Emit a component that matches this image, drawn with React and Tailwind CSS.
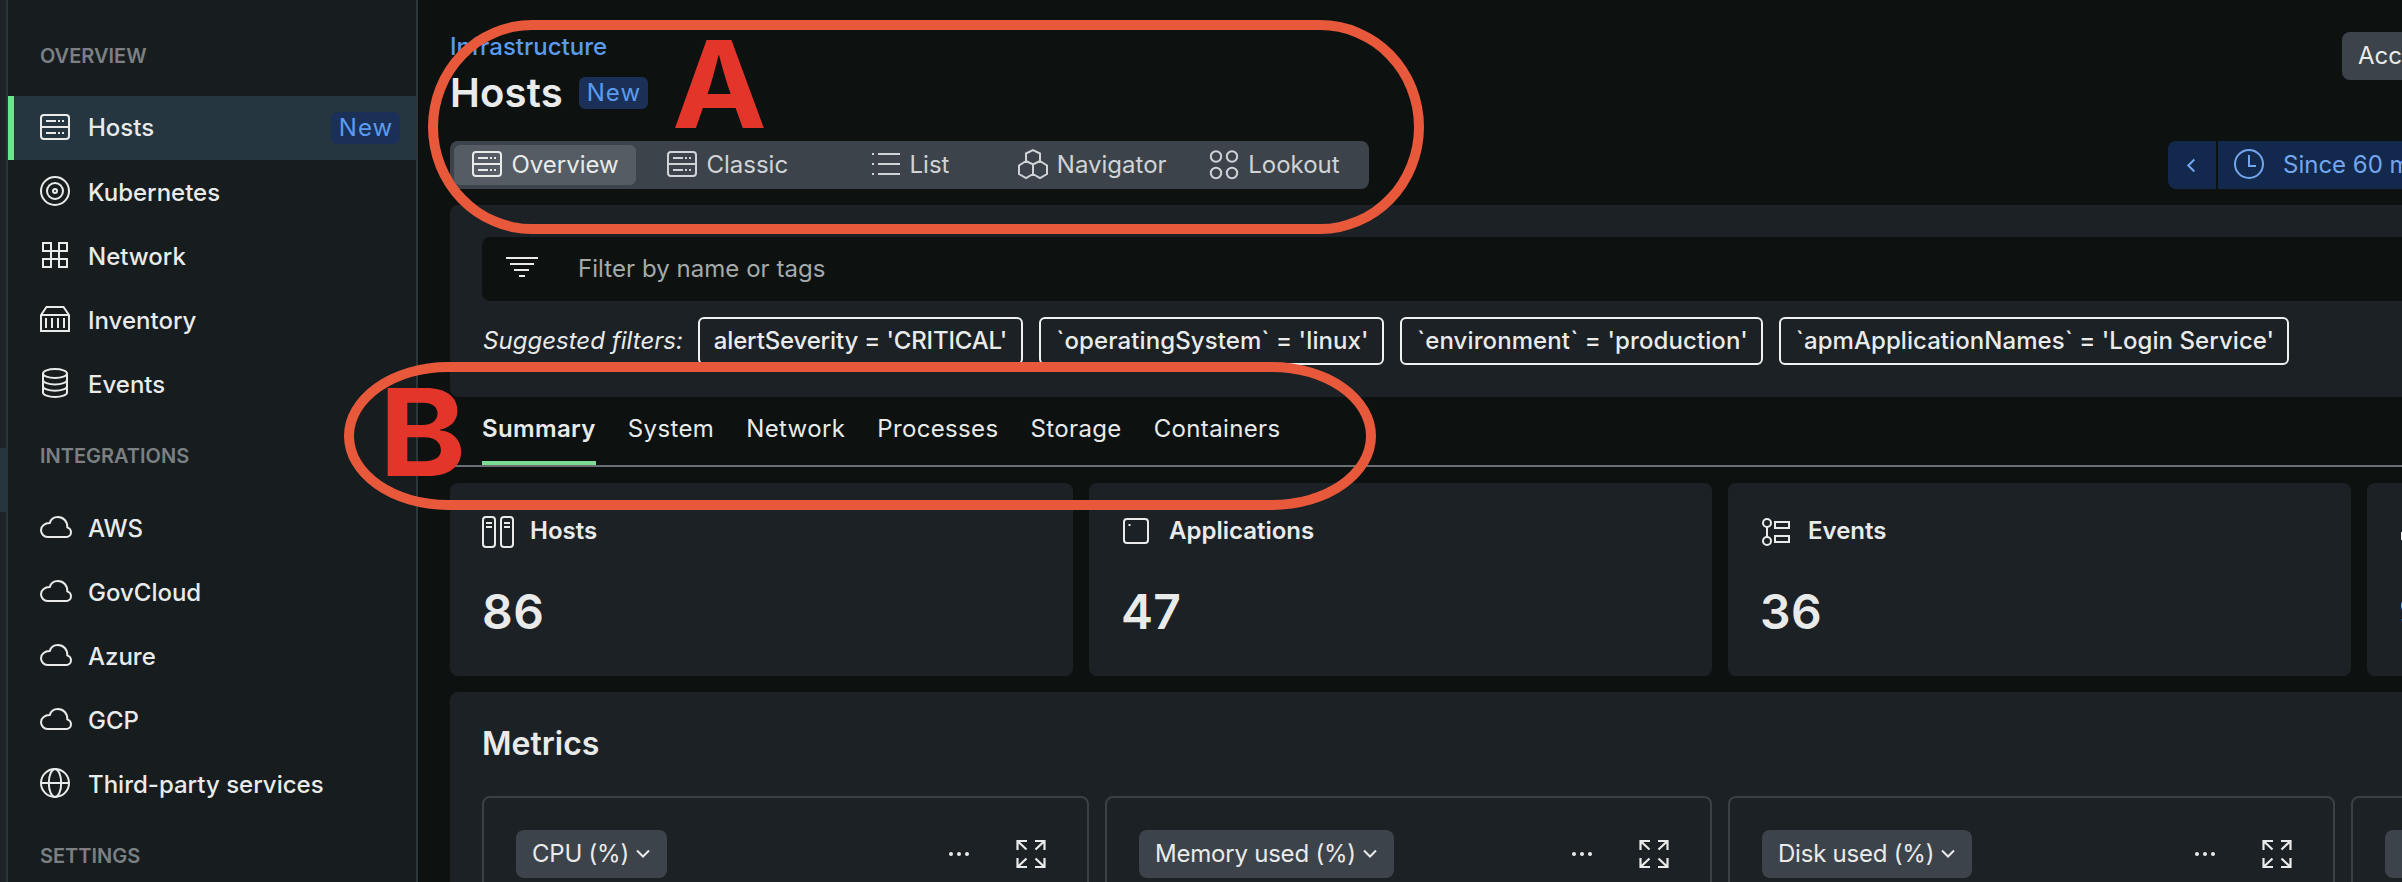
import React from "react";

function Icon({ children, className = "" }) {
  return (
    <svg
      viewBox="0 0 32 32"
      fill="none"
      stroke="currentColor"
      strokeWidth="2"
      className={`size-8 shrink-0 ${className}`}
    >
      {children}
    </svg>
  );
}

const HostIcon = () => (
  <Icon>
    <rect x="1" y="3" width="28" height="24" rx="3" />
    <path d="M1 15H29M6 9H16M18 9H20M22 9H24M6 21H16M18 21H20M22 21H24" />
  </Icon>
);

const KubernetesIcon = () => (
  <Icon>
    <circle cx="15" cy="15" r="14" />
    <circle cx="15" cy="15" r="8" />
    <circle cx="15" cy="15" r="2" />
  </Icon>
);

const NetworkIcon = () => (
  <Icon>
    <path d="M3 3H11V27H3V19H27V27H19V3H27V11H3Z" />
  </Icon>
);

const InventoryIcon = () => (
  <Icon>
    <path d="M1 11L6.5 3H23.5L29 11V27H1ZM1 11H29M6 14V24M12 14V24M18 14V24M24 14V24" />
  </Icon>
);

const DatabaseIcon = () => (
  <Icon>
    <ellipse cx="15" cy="5.5" rx="12" ry="4.5" />
    <path d="M3 5.5V24.5C3 27 8.4 29 15 29S27 27 27 24.5V5.5M3 12C3 14.500 8.400 16.500 15 16.500S27 14.500 27 12M3 18.200C3 20.700 8.400 22.700 15 22.700S27 20.700 27 18.200" />
  </Icon>
);

const CloudIcon = () => (
  <Icon>
    <path d="M7.500 25H26.500A4.700 4.700 0 0 0 31 20.500C31 18 29.600 16.200 27.300 15.400C27.600 9.500 23.500 5 17.800 5C13.800 5 10.900 7.200 9.700 11.100C5 11 1 13.800 1 18.200C1 22 4 25 7.500 25Z" />
  </Icon>
);

const GlobeIcon = () => (
  <Icon>
    <circle cx="15" cy="15" r="14" />
    <ellipse cx="15" cy="15" rx="6.200" ry="14" />
    <path d="M1 15H29" />
  </Icon>
);

const ListIcon = () => (
  <Icon>
    <path d="M1 5H3M7 5H29M1 15H3M7 15H29M1 25H3M7 25H29" />
  </Icon>
);

const HexagonsIcon = () => (
  <Icon>
    <path d="M15 1.200L22 4.500V12L15 15.300L8 12V4.500ZM8 12L1 16.500V25L8 29L15 25V15.300M22 12L29 16.500V25L22 29L15 25" />
  </Icon>
);

const CirclesIcon = () => (
  <Icon>
    <circle cx="7" cy="7.500" r="5.200" />
    <circle cx="23" cy="7.500" r="5.200" />
    <circle cx="7" cy="24" r="5.200" />
    <circle cx="23" cy="24" r="5.200" />
  </Icon>
);

const FilterIcon = () => (
  <Icon>
    <path d="M0 5H32M4 11H28M8 17H23M13 23H19" />
  </Icon>
);

const ClockIcon = () => (
  <Icon>
    <circle cx="15" cy="15" r="14" />
    <path d="M15 6V17H22" />
  </Icon>
);

const ServersIcon = () => (
  <Icon>
    <rect x="1" y="1" width="12" height="30" rx="3" />
    <rect x="19" y="1" width="12" height="30" rx="3" />
    <path d="M4 7H10M4 11H10M22 7H28M22 11H28" />
  </Icon>
);

const AppIcon = () => (
  <Icon>
    <rect x="3" y="3" width="24" height="24" rx="3" />
    <path d="M7.500 9H9.500" />
  </Icon>
);

const EventsIcon = () => (
  <Icon>
    <circle cx="7" cy="7" r="4" />
    <circle cx="7" cy="25" r="4" />
    <path d="M7 11V21" />
    <rect x="15" y="6" width="14" height="6" />
    <rect x="15" y="20" width="14" height="6" />
  </Icon>
);

const AlertIcon = () => (
  <Icon>
    <rect x="3" y="17" width="6" height="6" />
  </Icon>
);

const NewBadge = () => (
  <span className="flex h-8 w-[69px] items-center justify-center rounded-md bg-[#1a3056] pl-px tracking-[1.1px] text-[#5b9bef]">
    New
  </span>
);

const overview = [
  ["Hosts", HostIcon],
  ["Kubernetes", KubernetesIcon],
  ["Network", NetworkIcon],
  ["Inventory", InventoryIcon],
  ["Events", DatabaseIcon],
];

const integrations = [
  ["AWS", CloudIcon],
  ["GovCloud", CloudIcon],
  ["Azure", CloudIcon],
  ["GCP", CloudIcon],
  ["Third-party services", GlobeIcon],
];

const views = [
  ["Overview", HostIcon],
  ["Classic", HostIcon],
  ["List", ListIcon],
  ["Navigator", HexagonsIcon],
  ["Lookout", CirclesIcon],
];

const filters = [
  ["alertSeverity = 'CRITICAL'", "w-[325px] tracking-[-0.16px]"],
  ["`operatingSystem` = 'linux'", "w-[345px] pl-0.5 tracking-[0.1px]"],
  ["`environment` = 'production'", "w-[363px] pl-0.5 tracking-[0.1px]"],
  ["`apmApplicationNames` = 'Login Service'", "w-[510px] pl-0.5 tracking-[0.06px]"],
];

const tabs = ["System", "Network", "Processes", "Storage", "Containers"];

const stats = [
  ["Hosts", "86", ServersIcon],
  ["Applications", "47", AppIcon],
  ["Events", "36", EventsIcon],
  ["", "9", AlertIcon],
];

const metrics = ["CPU (%)", "Memory used (%)", "Disk used (%)", ""];

function NavHeading({ children }) {
  return (
    <h2 className="flex h-20 items-center pl-8 text-xl font-semibold text-[#7b8083]">{children}</h2>
  );
}

function NavItem({ label, icon: Glyph, active }) {
  return (
    <li
      className={`flex h-16 items-center border-l-[6px] pl-[26px] pr-4 font-medium ${
        active ? "border-[#6fe48f] bg-[#263640]" : "border-transparent"
      }`}
    >
      <Glyph />
      <span className={`ml-4 flex-1 ${active ? "" : "pt-0.5"}`}>{label}</span>
      {active && (
        <span className="font-normal">
          <NewBadge />
        </span>
      )}
    </li>
  );
}

function Sidebar() {
  return (
    <aside className="flex shrink-0">
      <div className="w-1.5 bg-[#1e2327] pt-[448px]">
        <div className="h-16 bg-[#263640]" />
      </div>
      <nav className="w-[412px] border-x-2 border-[#2c353a] bg-[#171c1f] pt-4">
        <NavHeading>OVERVIEW</NavHeading>
        <ul>
          {overview.map(([label, icon], i) => (
            <NavItem key={label} label={label} icon={icon} active={i === 0} />
          ))}
        </ul>
        <NavHeading>INTEGRATIONS</NavHeading>
        <ul>
          {integrations.map(([label, icon]) => (
            <NavItem key={label} label={label} icon={icon} />
          ))}
        </ul>
        <NavHeading>SETTINGS</NavHeading>
      </nav>
    </aside>
  );
}

function Header() {
  return (
    <header className="flex justify-between">
      <div className="flex flex-col pt-[31px]">
        <a className="h-8 font-medium leading-8 text-[#5b9bef]">Infrastructure</a>
        <div className="mt-3.5 flex h-8 items-center gap-4">
          <h1 className="text-[40px] font-semibold tracking-[0.2px]">Hosts</h1>
          <NewBadge />
        </div>
        <div className="mt-8 grid h-12 w-[919px] grid-cols-5 rounded-lg bg-[#3d434a] p-1">
          {views.map(([label, Glyph], i) => (
            <button
              key={label}
              className={`flex items-center justify-center gap-[7px] rounded-md pl-px ${
                i === 0 ? "bg-[#565c63]" : "text-[#d0d4d6]"
              }`}
            >
              <Glyph />
              {label}
            </button>
          ))}
        </div>
      </div>
      <div className="flex w-[234px] flex-col justify-between pt-8">
        <button className="flex h-12 w-[60px] items-center self-end overflow-hidden rounded-l-lg bg-[#3d434a] pl-4">
          Acc
        </button>
        <div className="flex h-12 gap-0.5 text-[#72a7ee]">
          <button className="flex w-12 items-center rounded-l-lg bg-[#12294d] pl-[18px]">
            <svg viewBox="0 0 10 14" fill="none" stroke="currentColor" strokeWidth="2" className="h-3.5 w-2.5">
              <path d="M8.300 1.500L2.300 7.500L8.300 13.500" />
            </svg>
          </button>
          <button className="flex flex-1 items-center overflow-hidden whitespace-nowrap bg-[#12294d] pl-4">
            <ClockIcon />
            <span className="ml-[17px]">Since 60 m</span>
          </button>
        </div>
      </div>
    </header>
  );
}

function FilterPanel() {
  return (
    <section className="mt-4 h-48 rounded-l-lg bg-[#1c2125] pl-8 pt-8">
      <div className="flex h-16 items-center rounded-l-lg bg-[#0d1211] pl-6">
        <FilterIcon />
        <span className="ml-10 tracking-[0.05px] text-[#a6a9aa]">Filter by name or tags</span>
      </div>
      <div className="mt-4 flex h-12 items-center gap-4">
        <span className="w-[200px] whitespace-nowrap pl-px tracking-[0.03px] italic">Suggested filters:</span>
        {filters.map(([label, size]) => (
          <button
            key={label}
            className={`flex h-12 shrink-0 items-center justify-center whitespace-nowrap rounded-md border-2 border-[#eef1f1] font-medium ${size}`}
          >
            {label}
          </button>
        ))}
      </div>
    </section>
  );
}

function Tabs() {
  return (
    <nav className="flex h-[70px] items-stretch gap-8 border-b-2 border-[#6a6f73] pl-8 tracking-[0.36px]">
      <button className="border-b-4 border-[#7edb94] pb-[1px] font-semibold">Summary</button>
      {tabs.map((label) => (
        <button key={label} className="pb-[5px]">
          {label}
        </button>
      ))}
    </nav>
  );
}

function StatCard({ label, value, icon: Glyph }) {
  return (
    <article className="h-[193px] w-[623px] shrink-0 rounded-lg bg-[#1c2125] px-8 pt-[33px]">
      <div className="flex gap-4">
        <Glyph />
        <h3 className="text-2xl leading-[29px] font-semibold">{label}</h3>
      </div>
      <p className="mt-10 text-5xl leading-[48px] font-semibold tracking-[0.4px]">{value}</p>
    </article>
  );
}

function MetricCard({ label }) {
  return (
    <article className="flex h-[200px] w-[607px] shrink-0 items-start rounded-lg border-2 border-[#3a4145] px-8 pt-8">
      <button className="flex h-12 items-center rounded-lg bg-[#3d434a] px-4 tracking-[-0.22px]">
        {label}
        <svg viewBox="0 0 14 10" fill="none" stroke="currentColor" strokeWidth="2" className="ml-[7px] mr-px mb-px h-2.5 w-3.5">
          <path d="M1 1.500L7 7.500L13 1.500" />
        </svg>
      </button>
      <div className="ml-auto flex h-12 items-center gap-[46px] pr-[9px]">
        <svg viewBox="0 0 22 6" fill="currentColor" className="h-1.5 w-[22px]">
          <circle cx="3" cy="3" r="2" />
          <circle cx="11" cy="3" r="2" />
          <circle cx="19" cy="3" r="2" />
        </svg>
        <svg viewBox="0 0 30 28" fill="none" stroke="currentColor" strokeWidth="2.200" className="h-7 w-[30px]">
          <path d="M1.500 10V1H11M1.500 1L10.500 9.500M19 1H28.500V10M28.500 1L19.500 9.500M1.500 18V27H11M1.500 27L10.500 18.500M19 27H28.500V18M28.500 27L19.500 18.500" />
        </svg>
      </div>
    </article>
  );
}

export default function App() {
  return (
    <div className="relative flex h-[882px] w-full overflow-hidden bg-[#0d1211] font-['Inter',sans-serif] text-2xl text-[#e9ebeb]">
      <Sidebar />
      <main className="min-w-0 flex-1 overflow-hidden pl-8">
        <Header />
        <FilterPanel />
        <Tabs />
        <div className="mt-4 flex gap-4">
          {stats.map(([label, value, icon]) => (
            <StatCard key={value} label={label} value={value} icon={icon} />
          ))}
        </div>
        <section className="mt-4 rounded-tl-lg bg-[#1c2125] pl-8 pt-8">
          <h2 className="text-[32px] leading-[39px] font-semibold">Metrics</h2>
          <div className="mt-[33px] flex gap-4">
            {metrics.map((label) => (
              <MetricCard key={label} label={label} />
            ))}
          </div>
        </section>
      </main>

      <div className="absolute left-[428px] top-[20px] h-[214px] w-[996px] rounded-[104px/107px] border-10 border-[#e8593b]" />
      <span className="absolute left-[672px] top-[40px] origin-left scale-x-[1.05] text-[121px] leading-[88px] font-bold text-[#e4352b]">
        A
      </span>
      <div className="absolute left-[344px] top-[362px] h-[148px] w-[1032px] rounded-[104px/74px] border-10 border-[#e8593b]" />
      <span className="absolute left-[379px] top-[388px] origin-left scale-x-[1.09] text-[121px] leading-[88px] font-bold text-[#e4352b]">
        B
      </span>
    </div>
  );
}
